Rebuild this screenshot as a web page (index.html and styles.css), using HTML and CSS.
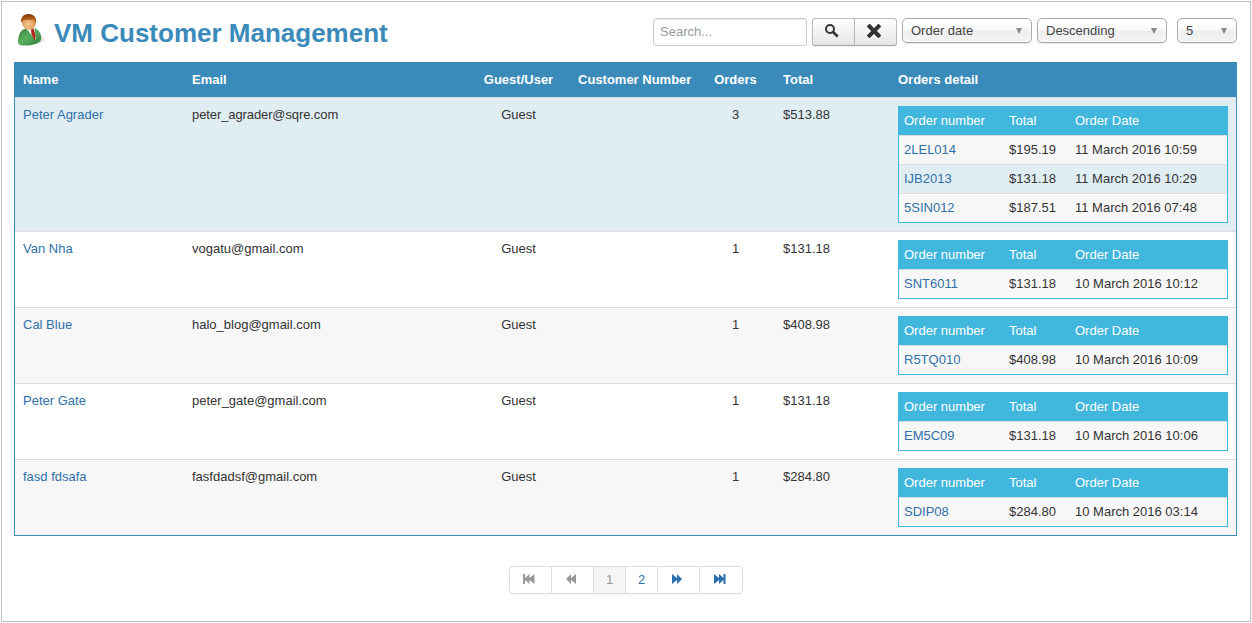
FILE: index.html
```html
<!DOCTYPE html>
<html lang="en">
<head>
    <meta charset="UTF-8">
    <meta name="viewport" content="width=device-width, initial-scale=1.0">
    <link rel="stylesheet" href="styles.css">
    <title>VM Customer Management</title>
</head>
<body>
    <div class="page">
        <header class="toolbar">
            <svg class="user-icon" width="28" height="34" viewBox="0 0 28 34">
                <defs>
                    <linearGradient id="suit" x1="0" y1="0" x2="1" y2="1">
                        <stop offset="0" stop-color="#2f7a35"/>
                        <stop offset="0.45" stop-color="#5cb062"/>
                        <stop offset="1" stop-color="#2c7a34"/>
                    </linearGradient>
                    <radialGradient id="face" cx="0.45" cy="0.65" r="0.6">
                        <stop offset="0" stop-color="#f8cb94"/>
                        <stop offset="1" stop-color="#d98a45"/>
                    </radialGradient>
                    <linearGradient id="hair" x1="0" y1="0" x2="0" y2="1">
                        <stop offset="0" stop-color="#7a3208"/>
                        <stop offset="0.5" stop-color="#b05a14"/>
                        <stop offset="1" stop-color="#7c3005"/>
                    </linearGradient>
                </defs>
                <ellipse cx="21" cy="26" rx="6.500" ry="5" fill="#000" opacity="0.08"/>
                <path d="M1 29C1 23 3 18 7 16L18 15C22 17 25 22 24 27C22 31 14 32.500 9 32.500C4 32.500 1 32 1 29Z" fill="url(#suit)"/>
                <path d="M9 15.500L17.500 15L19 27Z" fill="#f4f1ee"/>
                <path d="M14 16.500L16.500 15.500L18.500 22L18 28L14.500 21Z" fill="#b3231b"/>
                <ellipse cx="12" cy="9.500" rx="7" ry="7.300" fill="url(#face)"/>
                <path d="M4.500 10C3 5 6 1 11.500 1C17 1 20 5 19 10.500C18.500 8 17.500 6.500 16 6.500C12 7.500 8 6 6 7.500C5 8 5 9 4.500 10Z" fill="url(#hair)"/>
            </svg>
            <h1 class="title">VM Customer Management</h1>
            <div class="filters">
                <input class="search" type="text" placeholder="Search...">
                <div class="btn-group">
                    <button class="btn" type="button" aria-label="Search">
                        <svg width="14" height="14" viewBox="0 0 14 14"><circle cx="5" cy="5" r="4" fill="none" stroke="#333" stroke-width="2"/><path d="M8 8L12.700 12.500" stroke="#333" stroke-width="2.600"/></svg>
                    </button>
                    <button class="btn" type="button" aria-label="Clear">
                        <svg width="14" height="14" viewBox="0 0 14 14"><path d="M2.500 2.500L11.500 11.500M11.500 2.500L2.500 11.500" stroke="#333" stroke-width="4" stroke-linecap="square" stroke-linejoin="round"/></svg>
                    </button>
                </div>
                <div class="select select-order">Order date<span class="arrow"></span></div>
                <div class="select select-dir">Descending<span class="arrow"></span></div>
                <div class="select select-limit">5<span class="arrow"></span></div>
            </div>
        </header>

        <table class="customers">
            <colgroup>
                <col class="col-name">
                <col class="col-email">
                <col class="col-type">
                <col class="col-number">
                <col class="col-orders">
                <col class="col-total">
                <col class="col-detail">
            </colgroup>
            <thead>
                <tr>
                    <th>Name</th>
                    <th>Email</th>
                    <th class="center">Guest/User</th>
                    <th class="number">Customer Number</th>
                    <th class="center">Orders</th>
                    <th>Total</th>
                    <th>Orders detail</th>
                </tr>
            </thead>
            <tbody>
                <tr class="hovered">
                    <td><a href="#">Peter Agrader</a></td>
                    <td class="email">peter_agrader@sqre.com</td>
                    <td class="center">Guest</td>
                    <td></td>
                    <td class="center">3</td>
                    <td>$513.88</td>
                    <td>
                        <table class="orders">
                            <thead>
                                <tr><th class="order-id">Order number</th><th class="order-total">Total</th><th>Order Date</th></tr>
                            </thead>
                            <tbody>
                                <tr><td><a href="#">2LEL014</a></td><td>$195.19</td><td>11 March 2016 10:59</td></tr>
                                <tr><td><a href="#">IJB2013</a></td><td>$131.18</td><td>11 March 2016 10:29</td></tr>
                                <tr><td><a href="#">5SIN012</a></td><td>$187.51</td><td>11 March 2016 07:48</td></tr>
                            </tbody>
                        </table>
                    </td>
                </tr>
                <tr>
                    <td><a href="#">Van Nha</a></td>
                    <td>vogatu@gmail.com</td>
                    <td class="center">Guest</td>
                    <td></td>
                    <td class="center">1</td>
                    <td>$131.18</td>
                    <td>
                        <table class="orders">
                            <thead>
                                <tr><th class="order-id">Order number</th><th class="order-total">Total</th><th>Order Date</th></tr>
                            </thead>
                            <tbody>
                                <tr><td><a href="#">SNT6011</a></td><td>$131.18</td><td>10 March 2016 10:12</td></tr>
                            </tbody>
                        </table>
                    </td>
                </tr>
                <tr>
                    <td><a href="#">Cal Blue</a></td>
                    <td>halo_blog@gmail.com</td>
                    <td class="center">Guest</td>
                    <td></td>
                    <td class="center">1</td>
                    <td>$408.98</td>
                    <td>
                        <table class="orders">
                            <thead>
                                <tr><th class="order-id">Order number</th><th class="order-total">Total</th><th>Order Date</th></tr>
                            </thead>
                            <tbody>
                                <tr><td><a href="#">R5TQ010</a></td><td>$408.98</td><td>10 March 2016 10:09</td></tr>
                            </tbody>
                        </table>
                    </td>
                </tr>
                <tr>
                    <td><a href="#">Peter Gate</a></td>
                    <td>peter_gate@gmail.com</td>
                    <td class="center">Guest</td>
                    <td></td>
                    <td class="center">1</td>
                    <td>$131.18</td>
                    <td>
                        <table class="orders">
                            <thead>
                                <tr><th class="order-id">Order number</th><th class="order-total">Total</th><th>Order Date</th></tr>
                            </thead>
                            <tbody>
                                <tr><td><a href="#">EM5C09</a></td><td>$131.18</td><td>10 March 2016 10:06</td></tr>
                            </tbody>
                        </table>
                    </td>
                </tr>
                <tr>
                    <td><a href="#">fasd fdsafa</a></td>
                    <td>fasfdadsf@gmail.com</td>
                    <td class="center">Guest</td>
                    <td></td>
                    <td class="center">1</td>
                    <td>$284.80</td>
                    <td>
                        <table class="orders">
                            <thead>
                                <tr><th class="order-id">Order number</th><th class="order-total">Total</th><th>Order Date</th></tr>
                            </thead>
                            <tbody>
                                <tr><td><a href="#">SDIP08</a></td><td>$284.80</td><td>10 March 2016 03:14</td></tr>
                            </tbody>
                        </table>
                    </td>
                </tr>
            </tbody>
        </table>

        <ul class="pagination">
            <li class="icon disabled"><svg width="12" height="10" viewBox="0 0 12 10"><path d="M0 0H2V4L6.500 0V4L11.500 0V10L6.500 6V10L2 6V10H0Z"/></svg></li>
            <li class="icon disabled"><svg width="10" height="10" viewBox="0 0 10 10"><path d="M0 5L5 0V4L10 0V10L5 6V10Z"/></svg></li>
            <li class="current">1</li>
            <li><a href="#">2</a></li>
            <li class="icon"><svg width="10" height="10" viewBox="0 0 10 10"><path d="M0 0L5 4V0L10 5L5 10V6L0 10Z"/></svg></li>
            <li class="icon last"><svg width="12" height="10" viewBox="0 0 12 10"><path d="M0 0L5 4V0L9.500 4V0H11.500V10H9.500V6L5 10V6L0 10Z"/></svg></li>
        </ul>
    </div>
</body>
</html>
```
FILE: styles.css
```css
* {
    box-sizing: border-box;
}
body {
    margin: 0;
    padding: 1px;
    background: #fff;
    color: #333;
    font-family: "Liberation Sans", Arial, sans-serif;
    font-size: 13px;
    line-height: 18px;
}
a {
    color: #3071a9;
    text-decoration: none;
}
.page {
    width: 1250px;
    height: 621px;
    padding: 0 13px 0 12px;
    border: 1px solid #c0c0c0;
}
.toolbar {
    display: flex;
    align-items: flex-start;
    height: 60px;
    padding-top: 11px;
}
.user-icon {
    margin-left: 3px;
}
.title {
    margin: 4px 0 0 9px;
    color: #3a8aba;
    font-size: 26px;
    line-height: 32px;
    white-space: nowrap;
}
.filters {
    display: flex;
    align-items: flex-start;
    margin: 5px 0 0 auto;
}
.search {
    width: 154px;
    height: 28px;
    margin: 0 5px 0 0;
    padding: 3px 6px 5px;
    border: 1px solid #ccc;
    border-radius: 3px;
    box-shadow: inset 0 1px 1px rgba(0, 0, 0, 0.075);
    font: 13px/18px "Liberation Sans", Arial, sans-serif;
}
.search::placeholder {
    color: #999;
}
.btn-group {
    display: flex;
    margin-right: 5px;
}
.btn {
    display: flex;
    align-items: center;
    justify-content: center;
    width: 43px;
    height: 28px;
    padding: 0 4px 3px 0;
    border: 1px solid #b3b3b3;
    border-color: #bbb #bbb #a2a2a2;
    border-radius: 3px 0 0 3px;
    background: linear-gradient(#fff, #e6e6e6);
    box-shadow: 0 1px 2px rgba(0, 0, 0, 0.05);
}
.btn + .btn {
    margin-left: -1px;
    border-radius: 0 3px 3px 0;
}
.select {
    display: flex;
    align-items: center;
    justify-content: space-between;
    height: 25px;
    padding: 0 9px 0 8px;
    border: 1px solid #aaa;
    border-radius: 5px;
    background: linear-gradient(#fff 20%, #f6f6f6 50%, #eee 52%, #f4f4f4 100%);
    box-shadow: inset 0 0 3px #fff, 0 1px 1px rgba(0, 0, 0, 0.1);
    color: #444;
}
.select-order {
    width: 130px;
}
.select-dir {
    width: 130px;
    margin-left: 5px;
}
.select-limit {
    width: 60px;
    margin-left: 10px;
}
.arrow {
    border: 3.5px solid transparent;
    border-top: 6px solid #888;
    border-bottom: 0;
}
.customers {
    width: 1223px;
    table-layout: fixed;
    border: 1px solid #3a8aba;
    border-spacing: 0;
}
.col-name { width: 169px; }
.col-email { width: 282px; }
.col-type { width: 104px; }
.col-number { width: 125px; }
.col-orders { width: 80px; }
.col-total { width: 115px; }
.col-detail { width: 346px; }
.customers th,
.customers td {
    padding: 8px;
    text-align: left;
    vertical-align: top;
}
.customers th {
    background: #3a8aba;
    color: #fff;
    white-space: nowrap;
}
.customers td {
    border-top: 1px solid #ddd;
}
.customers .number {
    padding-right: 0;
}
.customers .center {
    padding-left: 9px;
    text-align: center;
}
.customers .email {
    letter-spacing: -0.1px;
}
.customers tbody tr:nth-child(odd) > td {
    background: #f7f7f7;
}
.customers tbody tr.hovered > td {
    background: #e0edf3;
}
.customers .orders {
    width: 330px;
    table-layout: fixed;
    border: 1px solid #42b7dd;
    border-spacing: 0;
}
.customers .orders th,
.customers .orders td {
    padding: 5px;
}
.customers .orders th {
    background: #42b7dd;
    font-weight: normal;
}
.customers .orders tr:nth-child(odd) > td {
    background: #f7f7f7;
}
.customers .orders tr:nth-child(even) > td {
    background: #e0edf3;
}
.order-id {
    width: 105px;
}
.order-total {
    width: 66px;
}
.pagination {
    display: flex;
    width: 234px;
    height: 28px;
    margin: 30px 0 0 495px;
    padding: 0;
    border: 1px solid #ddd;
    border-radius: 4px;
    box-shadow: 0 1px 2px rgba(0, 0, 0, 0.05);
    list-style: none;
}
.pagination li {
    display: flex;
    align-items: center;
    justify-content: center;
    width: 32px;
    border-right: 1px solid #ddd;
}
.pagination .icon {
    width: 42px;
    padding: 0 3px 2px 0;
    fill: #2a6fad;
}
.pagination .disabled {
    fill: #999;
}
.pagination .current {
    background: #f5f5f5;
    color: #999;
}
.pagination .last {
    border-right: 0;
}
```
